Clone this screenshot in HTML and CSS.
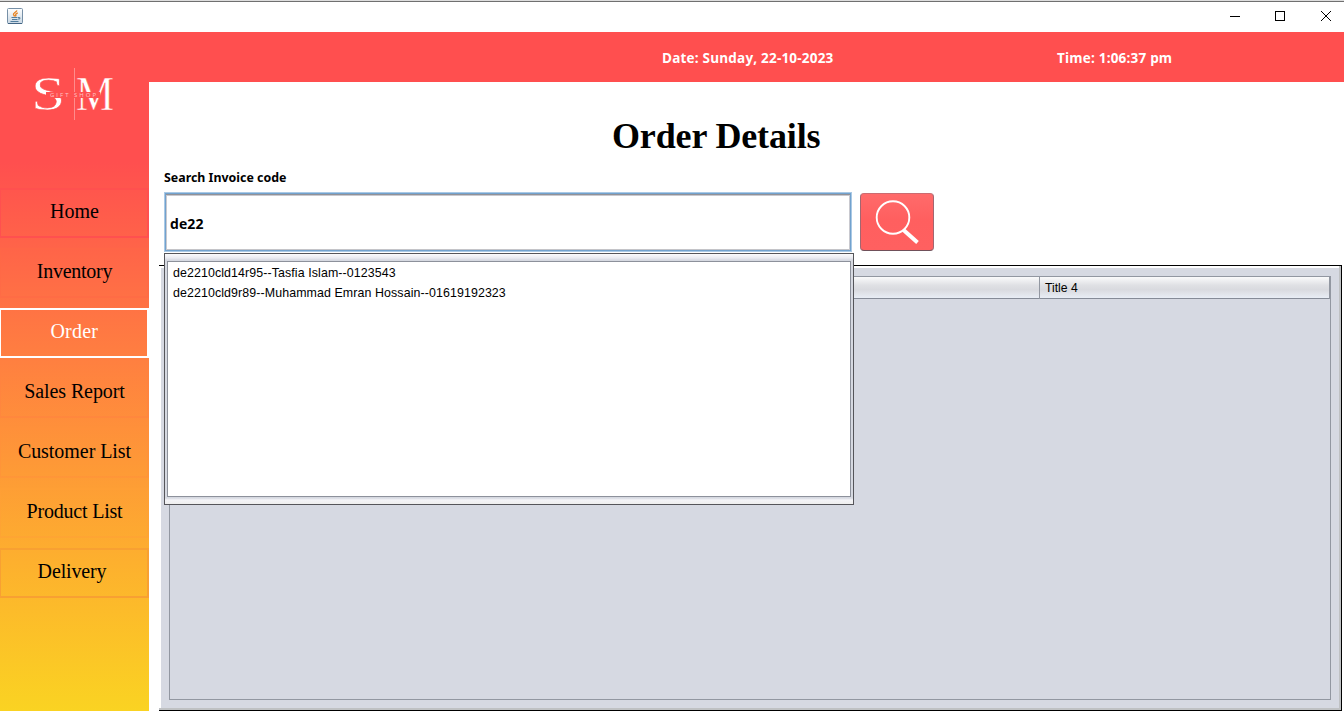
FILE: index.html
```html
<!DOCTYPE html>
<html lang="en">
<head>
<meta charset="utf-8">
<title>Order Details</title>
<link rel="stylesheet" href="styles.css">
</head>
<body>
<div class="window">
  <header class="titlebar">
    <svg class="java" width="16" height="16" viewBox="0 0 16 16">
      <defs><linearGradient id="jg" x1="0" y1="0" x2="0" y2="1"><stop offset="0" stop-color="#fff"/><stop offset="1" stop-color="#c9d7e3"/></linearGradient></defs>
      <rect x=".5" y=".5" width="15" height="15" rx="1" fill="url(#jg)" stroke="#7790a7"/>
      <path d="M1 15.5H15" stroke="#426585"/>
      <path d="M10 2.500C9 4.500 6 5 6.500 6.500L7.600 8.400M10.800 4.800C8.500 5.600 8.600 6.500 8.900 7L8.400 8.400" fill="none" stroke="#e78221" stroke-width="1.4"/>
      <path d="M4.500 9.500H10.500M5 11.500H10.500M3.500 13.500H11.500M11 9.500H12.800V11H11" fill="none" stroke="#527d9e"/>
    </svg>
    <svg class="controls" width="102" height="12" viewBox="0 0 102 12" fill="none" stroke="#000" shape-rendering="crispEdges">
      <path d="M0 6.5H10M45.500 1.500H54.500V10.500H45.500Z"/>
      <path d="M91 1L101 11M101 1L91 11" shape-rendering="auto"/>
    </svg>
  </header>
  <div class="body">
    <aside class="sidebar">
      <div class="logo">
        <span class="letter s">S</span><span class="letter m">M</span>
        <span class="rule"></span>
        <span class="band"></span>
        <span class="tag">GIFT SHOP</span>
      </div>
      <nav class="nav">
        <a class="item home"><span>Home</span></a>
        <a class="item inventory"><span>Inventory</span></a>
        <a class="item active"><span>Order</span></a>
        <a class="item sales"><span>Sales Report</span></a>
        <a class="item customer"><span>Customer List</span></a>
        <a class="item product"><span>Product List</span></a>
        <a class="item delivery"><span>Delivery</span></a>
      </nav>
    </aside>
    <div class="content">
      <div class="topbar">
        <span class="date">Date: Sunday, 22-10-2023</span>
        <span class="time">Time: 1:06:37 pm</span>
      </div>
      <main class="main">
        <h1 class="title">Order Details</h1>
        <div class="label">Search Invoice code</div>
        <div class="search">
          <div class="field"><span>de22</span>
            <div class="popup">
              <ul class="list">
                <li>de2210cld14r95--Tasfia Islam--0123543</li>
                <li>de2210cld9r89--Muhammad Emran Hossain--01619192323</li>
              </ul>
            </div>
          </div>
          <button class="go">
            <svg width="74" height="58" viewBox="0 0 74 58" fill="none" stroke="#fff">
              <circle cx="33" cy="23.500" r="16.300" stroke-width="1.900"/>
              <path d="M43.500 36L57.500 48.500" stroke-width="4"/>
            </svg>
          </button>
        </div>
        <div class="panel">
          <div class="table">
            <div class="thead"><div></div><div></div><div></div><div class="th">Title 4</div></div>
          </div>
        </div>
      </main>
    </div>
  </div>
</div>
</body>
</html>
```
FILE: styles.css
```css
* { box-sizing: border-box; }
body { margin: 0; background: #fff; color: #000; font-family: "Liberation Sans", Arial, sans-serif; }
.window { width: 1344px; height: 711px; overflow: hidden; display: flex; flex-direction: column; }
.titlebar { height: 32px; flex: none; display: flex; justify-content: space-between; align-items: center; padding: 0 12px 0 7px; border-top: 1px solid #ddd; box-shadow: inset 0 1px #707070; }
.java { margin-top: -1px; display: block; }
.controls { margin-top: -1px; display: block; }
.body { flex: 1; display: flex; min-height: 0; }
.sidebar { width: 149px; flex: none; background: linear-gradient(#ff4f4f 0, #ff4f4f 130px, #ff8040 330px, #fdb02e 530px, #fad322 679px); }
.logo { position: relative; height: 156px; }
.letter { position: absolute; color: #fff; font: 48px/48px "Liberation Serif", serif; top: 38px; transform-origin: 0 0; -webkit-text-stroke: .5px #ff4f4f; }
.s { left: 31px; transform: scaleX(1.28); }
.m { left: 76px; transform: scaleX(.89); }
.rule { position: absolute; left: 74px; top: 36px; width: 1px; height: 52px; background: #ff8c8c; }
.band { position: absolute; left: 46px; top: 60px; width: 54px; height: 6px; background: #ff4f4f; }
.tag { position: absolute; left: 50px; top: 59px; color: #ffc4c4; font: 6px/8px "Open Sans", sans-serif; letter-spacing: 2px; white-space: nowrap; }
.nav { display: flex; flex-direction: column; gap: 10px; }
.item { height: 50px; width: 149px; border: 2px solid transparent; border-left-width: 1px; display: flex; align-items: center; justify-content: center; font: 20px/24px "Liberation Serif", serif; white-space: nowrap; padding: 0 0 5px 1px; }
.home { border-color: #ff504f; }
.inventory { border-color: #ff684680; letter-spacing: -.25px; }
.active { border-color: #fff; color: #fff; width: 148.500px; letter-spacing: .2px; }
.sales { border-color: #ff823f80; letter-spacing: -.1px; }
.customer { border-color: #ff903a80; letter-spacing: -.05px; }
.product { border-color: #ffa03580; letter-spacing: -.2px; }
.delivery { border-color: #f8a032; letter-spacing: -.15px; padding-right: 5px; }
.content { flex: 1; min-width: 0; display: flex; flex-direction: column; }
.topbar { height: 50px; flex: none; background: #ff4f4f; display: flex; color: #fff; font: bold 13.5px/18px "Open Sans", sans-serif; letter-spacing: .2px; padding: 17px 0 0 513px; white-space: nowrap; }
.date { width: 395px; }
.main { flex: 1; display: flex; flex-direction: column; }
.title { margin: 34px 0 0 463px; font: bold 36px/40px "Liberation Serif", serif; letter-spacing: -.15px; white-space: nowrap; }
.label { margin: 14px 0 0 15px; font: bold 12.4px/16px "Noto Sans", sans-serif; white-space: nowrap; }
.search { display: flex; height: 61px; margin: 6px 0 0 15px; }
.field { position: relative; width: 688px; height: 60px; border: 1px solid #aac9e5; box-shadow: inset 0 0 0 1px #72a2ce, inset 0 2px #929297, inset 0 3px #c9c9cf, inset 2px 0 #c9c9cf, inset -2px 0 #c9c9cf, inset 0 -2px #c4c4c8; padding: 21px 5px; font: bold 14px/19px "Open Sans", sans-serif; letter-spacing: .1px; }
.popup { position: absolute; z-index: 2; left: -1px; top: 60px; width: 690px; height: 252px; border: 1px solid #55555a; background: linear-gradient(#fafafc, #e9eaf0 4px, #d6d9e1 6px, #d6d9e1 244px, #f4f4f8 246px, #eee); padding: 7px 2px; }
.list { list-style: none; margin: 0; padding: 1px 5px; height: 236px; background: #fff; border: 1px solid #8d919b; font: 12.4px/20px "Liberation Sans", sans-serif; letter-spacing: .1px; white-space: nowrap; }
.go { margin: 1px 0 0 8px; width: 74px; height: 58px; padding: 0; border: 1px solid #a36670; border-top-color: #cc6b70; border-bottom-color: #70505a; border-radius: 4px; background: linear-gradient(#ff6b6b, #ff5f5f 45%, #ff6060); }
.go svg { display: block; margin: 0 0 0 -1px; }
.panel { margin: 12px 2px 0 10px; height: 446px; border-top: 1px solid #000; border-right: 1px solid #000; border-bottom: 1px solid #000; background: linear-gradient(#fff, #fff) 0 0 / 2px 100% no-repeat, #d6d9e2; box-shadow: inset -2px -2px #bfc1c3, inset 0 2px #fff; padding: 10px; }
.table { width: 1162px; height: 424px; border: 1px solid #9297a1; }
.thead { height: 22px; display: grid; grid-template-columns: 290px 290px 290px 1fr; border-bottom: 1px solid #858b97; background: linear-gradient(#fafafb, #dfe0e4 40%, #d9dadf 60%, #e8edf5); }
.thead div { border-right: 1px solid #9297a1; }
.th { font: 12.2px/22px "Liberation Sans", sans-serif; padding-left: 5px; }
```
